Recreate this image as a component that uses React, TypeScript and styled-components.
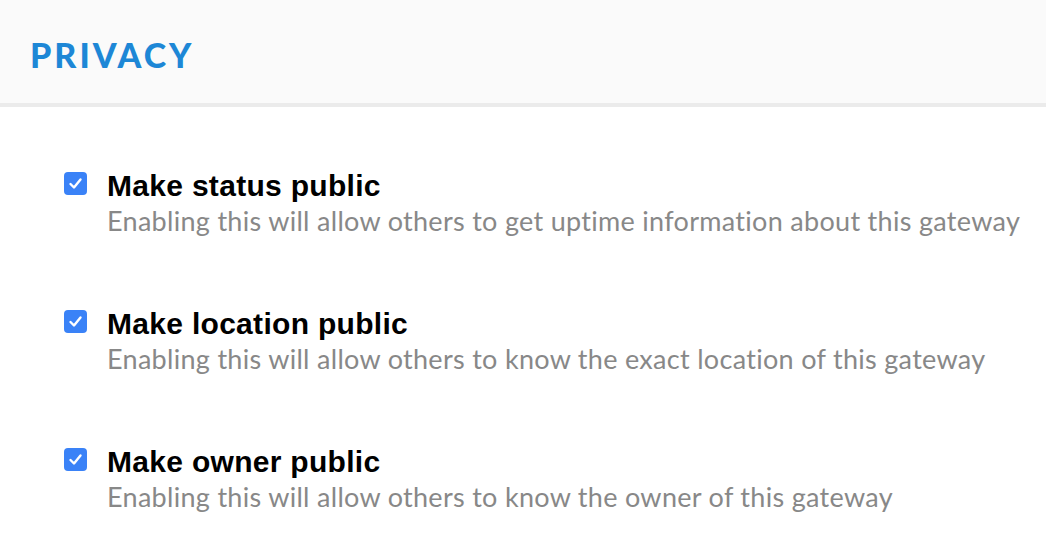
import React from 'react';
import styled, { createGlobalStyle } from 'styled-components';

const GlobalStyle = createGlobalStyle`
    html, body {
        margin: 0;
        padding: 0;
        background: #ffffff;
    }
`;

const options = [
    {
        title: 'Make status public',
        description:
            'Enabling this will allow others to get uptime information about this gateway',
    },
    {
        title: 'Make location public',
        description:
            'Enabling this will allow others to know the exact location of this gateway',
    },
    {
        title: 'Make owner public',
        description: 'Enabling this will allow others to know the owner of this gateway',
    },
];

function CheckMark() {
    return (
        <svg width="23" height="23" viewBox="0 0 23 23">
            <rect width="23" height="23" rx="4" fill="#3a82f7" />
            <path
                d="M6.5 12 L10 15.5 L16.5 7.5"
                fill="none"
                stroke="#ffffff"
                strokeWidth="2.4"
                strokeLinecap="round"
                strokeLinejoin="round"
            />
        </svg>
    );
}

export default function App() {
    return (
        <Layout>
            <GlobalStyle />
            <Header>
                <Title>PRIVACY</Title>
            </Header>
            <OptionList>
                {options.map((option) => (
                    <OptionRow key={option.title}>
                        <CheckBox>
                            <CheckMark />
                        </CheckBox>
                        <OptionText>
                            <OptionTitle>{option.title}</OptionTitle>
                            <OptionDescription>{option.description}</OptionDescription>
                        </OptionText>
                    </OptionRow>
                ))}
            </OptionList>
        </Layout>
    );
}

const Layout = styled.div`
    width: 1046px;
    height: 542px;
    background: #ffffff;
    overflow: hidden;
`;

const Header = styled.div`
    height: 107px;
    display: flex;
    align-items: center;
    padding: 6px 0 0 30px;
    background: #fafafa;
    border-bottom: 4px solid #ebebeb;
    box-sizing: border-box;
`;

const Title = styled.h1`
    margin: 0;
    font-family: 'Lato', sans-serif;
    font-weight: 900;
    font-size: 34px;
    letter-spacing: 3px;
    color: #1d87d6;
`;

const OptionList = styled.div`
    display: flex;
    flex-direction: column;
    gap: 68px;
    padding: 61px 0 0 64px;
`;

const OptionRow = styled.div`
    display: flex;
    gap: 20px;
`;

const CheckBox = styled.div`
    width: 23px;
    height: 23px;
    margin-top: 4px;
    flex-shrink: 0;

    svg {
        display: block;
    }
`;

const OptionText = styled.div`
    display: flex;
    flex-direction: column;
`;

const OptionTitle = styled.div`
    font-family: 'Liberation Sans', Arial, sans-serif;
    font-weight: bold;
    font-size: 30px;
    line-height: 36px;
    letter-spacing: 0.3px;
    color: #000000;
`;

const OptionDescription = styled.div`
    font-family: 'Lato', sans-serif;
    font-size: 27px;
    line-height: 34px;
    letter-spacing: 0.3px;
    color: #888888;
`;
